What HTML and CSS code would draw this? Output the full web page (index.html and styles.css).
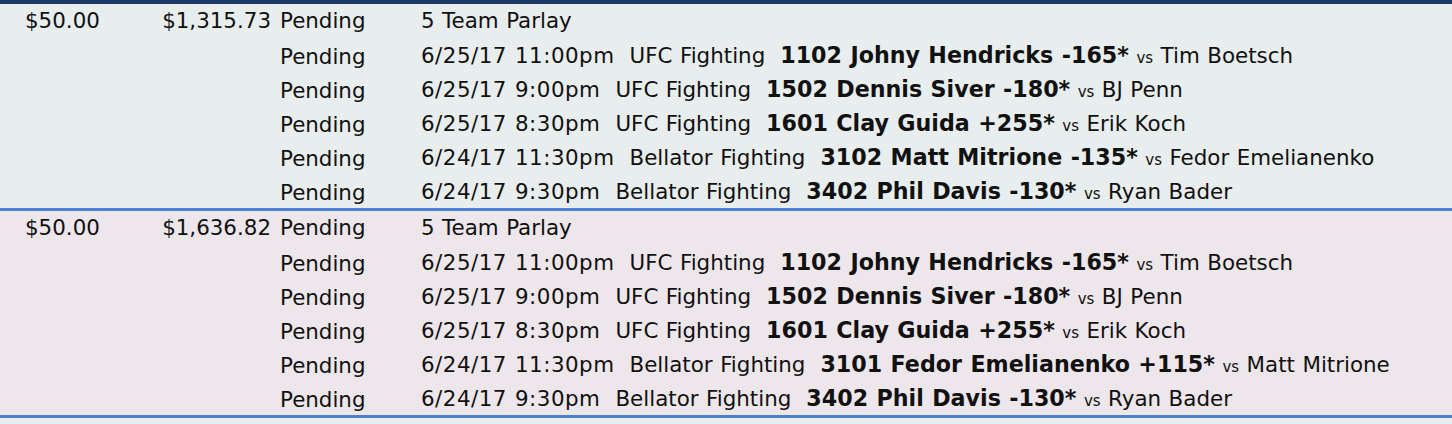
FILE: index.html
```html
<!DOCTYPE html>
<html>
<head>
<meta charset="utf-8">
<link rel="stylesheet" href="styles.css">
</head>
<body>
<div class="topbar"></div>
<div class="ticket ticket-a">
  <div class="row">
    <div class="risk">$50.00</div><div class="win">$1,315.73</div><div class="status">Pending</div><div class="desc">5 Team Parlay</div>
  </div>
  <div class="row">
    <div class="risk"></div><div class="win"></div><div class="status">Pending</div><div class="desc"><span class="dt">6/25/17 11:00pm</span>  UFC Fighting  <b>1102 Johny Hendricks -165*</b> <span class="vs">vs</span> Tim Boetsch</div>
  </div>
  <div class="row">
    <div class="risk"></div><div class="win"></div><div class="status">Pending</div><div class="desc"><span class="dt">6/25/17 9:00pm</span>  UFC Fighting  <b>1502 Dennis Siver -180*</b> <span class="vs">vs</span> BJ Penn</div>
  </div>
  <div class="row">
    <div class="risk"></div><div class="win"></div><div class="status">Pending</div><div class="desc"><span class="dt">6/25/17 8:30pm</span>  UFC Fighting  <b>1601 Clay Guida +255*</b> <span class="vs">vs</span> Erik Koch</div>
  </div>
  <div class="row">
    <div class="risk"></div><div class="win"></div><div class="status">Pending</div><div class="desc"><span class="dt">6/24/17 11:30pm</span>  Bellator Fighting  <b>3102 Matt Mitrione -135*</b> <span class="vs">vs</span> Fedor Emelianenko</div>
  </div>
  <div class="row">
    <div class="risk"></div><div class="win"></div><div class="status">Pending</div><div class="desc"><span class="dt">6/24/17 9:30pm</span>  Bellator Fighting  <b>3402 Phil Davis -130*</b> <span class="vs">vs</span> Ryan Bader</div>
  </div>
</div>
<div class="ticket ticket-b">
  <div class="row">
    <div class="risk">$50.00</div><div class="win">$1,636.82</div><div class="status">Pending</div><div class="desc">5 Team Parlay</div>
  </div>
  <div class="row">
    <div class="risk"></div><div class="win"></div><div class="status">Pending</div><div class="desc"><span class="dt">6/25/17 11:00pm</span>  UFC Fighting  <b>1102 Johny Hendricks -165*</b> <span class="vs">vs</span> Tim Boetsch</div>
  </div>
  <div class="row">
    <div class="risk"></div><div class="win"></div><div class="status">Pending</div><div class="desc"><span class="dt">6/25/17 9:00pm</span>  UFC Fighting  <b>1502 Dennis Siver -180*</b> <span class="vs">vs</span> BJ Penn</div>
  </div>
  <div class="row">
    <div class="risk"></div><div class="win"></div><div class="status">Pending</div><div class="desc"><span class="dt">6/25/17 8:30pm</span>  UFC Fighting  <b>1601 Clay Guida +255*</b> <span class="vs">vs</span> Erik Koch</div>
  </div>
  <div class="row">
    <div class="risk"></div><div class="win"></div><div class="status">Pending</div><div class="desc"><span class="dt">6/24/17 11:30pm</span>  Bellator Fighting  <b>3101 Fedor Emelianenko +115*</b> <span class="vs">vs</span> Matt Mitrione</div>
  </div>
  <div class="row">
    <div class="risk"></div><div class="win"></div><div class="status">Pending</div><div class="desc"><span class="dt">6/24/17 9:30pm</span>  Bellator Fighting  <b>3402 Phil Davis -130*</b> <span class="vs">vs</span> Ryan Bader</div>
  </div>
</div>
</body>
</html>
```
FILE: styles.css
```css
html, body {
  margin: 0;
  padding: 0;
}
body {
  background: #e8eded;
  font-family: "DejaVu Sans", Verdana, sans-serif;
  font-size: 21.4px;
  color: #111;
}
.topbar {
  height: 4px;
  background: #1b3a68;
}
.ticket {
  border-bottom: 3px solid #4f7fd0;
}
.ticket-a {
  background: #e8eded;
}
.ticket-b {
  background: #ede6ea;
}
.row {
  display: grid;
  grid-template-columns: 148px 125px 148px 1fr;
  height: 34px;
  align-items: center;
  line-height: 34px;
}
.risk {
  padding-left: 25px;
}
.win {
  text-align: right;
  padding-right: 2px;
}
.status {
  padding-left: 7px;
}
.desc {
  white-space: pre;
  word-spacing: 0.7px;
}
.dt {
  letter-spacing: 0.5px;
}
.desc b {
  font-weight: bold;
  font-size: 22.2px;
}
.vs {
  font-size: 15px;
}
```
